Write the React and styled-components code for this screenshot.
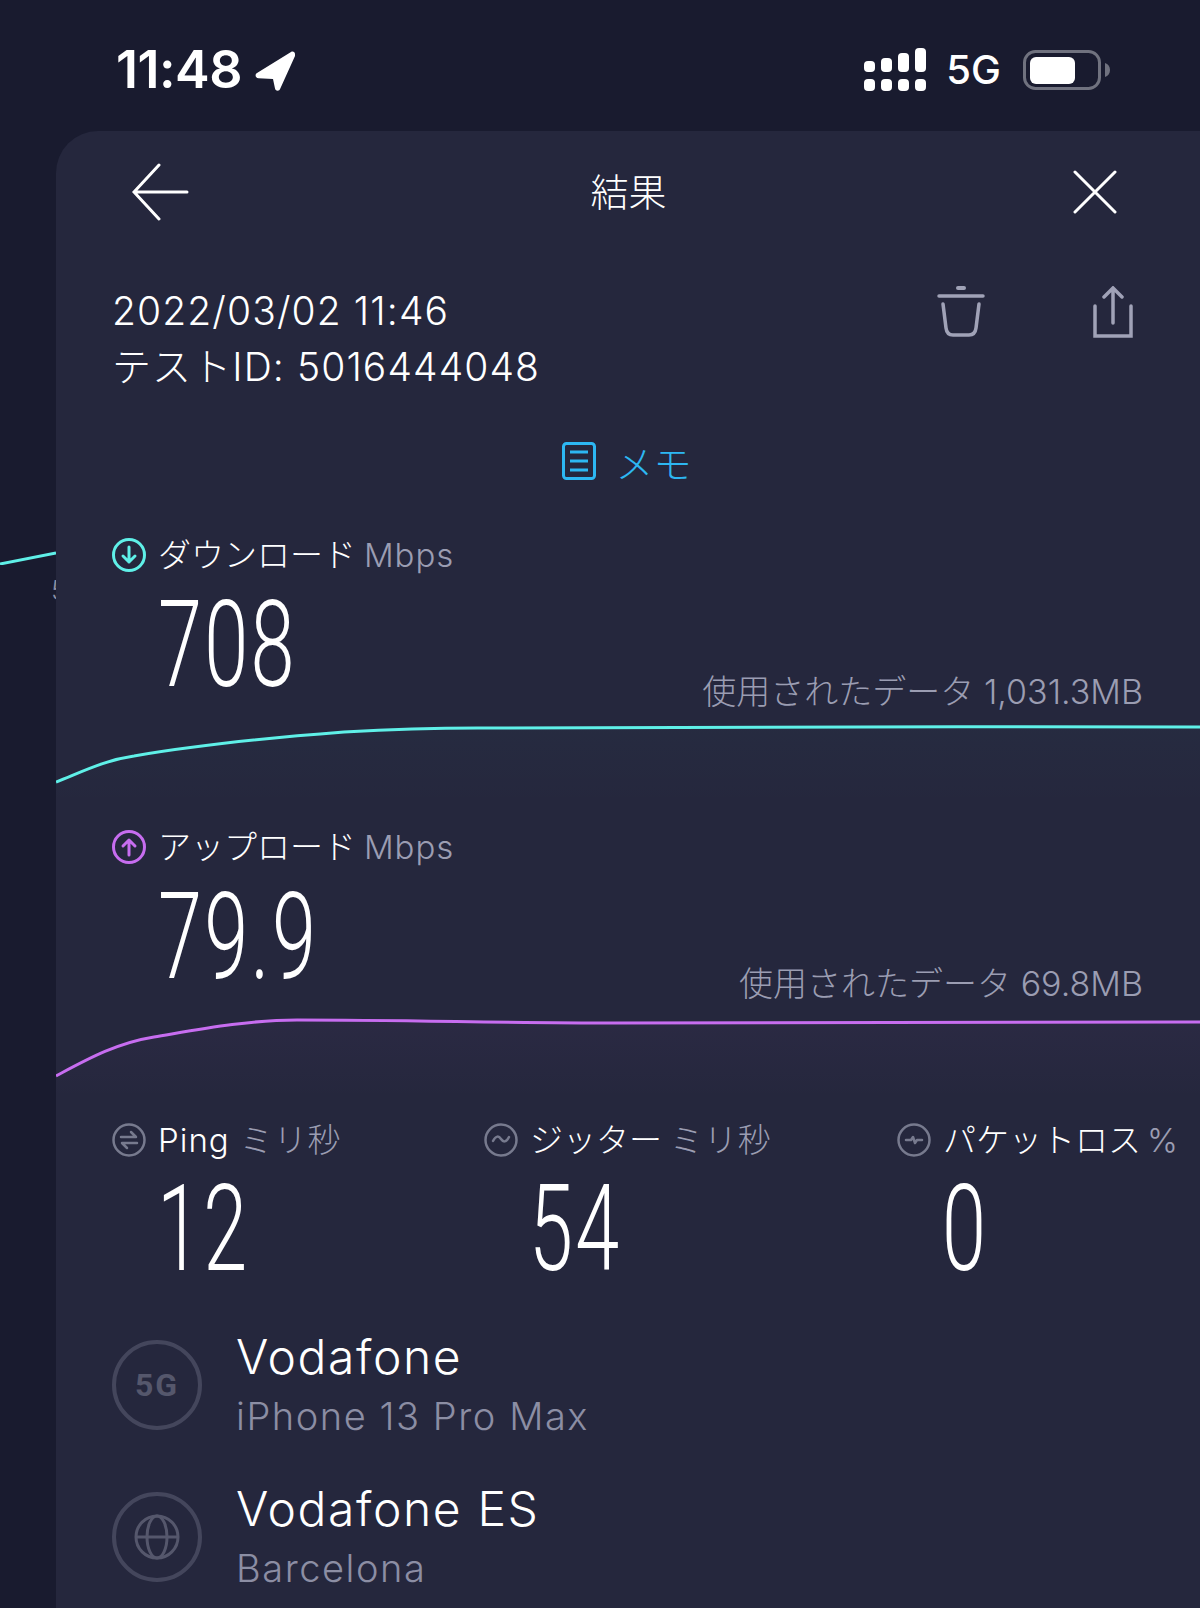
import React from 'react';
import styled, { createGlobalStyle } from 'styled-components';

const Global = createGlobalStyle`
  html, body { margin: 0; padding: 0; background: #191b2f; }
  body { font-family: Inter, "Noto Sans CJK JP", sans-serif; }
  #root { width: 1200px; height: 1608px; overflow: hidden; }
`;
const sans = 'Inter, "Noto Sans CJK JP", sans-serif';

const Page = styled.div`width:1200px;height:1608px;overflow:hidden;background:#191b2f;color:#fff;font-family:${sans};`;
const StatusBar = styled.header`height:131px;display:flex;align-items:center;justify-content:space-between;padding:24px 89px 16px 116px;box-sizing:border-box;`;
const Clock = styled.div`display:flex;align-items:center;gap:13px;font-size:52px;font-weight:600;line-height:1;letter-spacing:-.5px;`;
const StatusRight = styled.div`display:flex;align-items:center;`;
const Net = styled.span`font-size:40px;font-weight:500;margin:0 22px 0 20px;line-height:1;`;
const Body = styled.div`display:flex;align-items:stretch;height:1477px;`;
const Gutter = styled.aside`width:56px;flex:none;overflow:hidden;padding-top:420px;`;
const GutterDigit = styled.div`margin:12px 0 0 51px;font-size:27px;line-height:1;font-weight:300;color:#8d8fa3;`;
const Card = styled.main`flex:1;min-width:0;background:#25273d;border-top-left-radius:42px;overflow:hidden;`;
const NavBar = styled.div`height:122px;padding:0 83px 0 76px;display:flex;align-items:center;justify-content:space-between;position:relative;`;
const Title = styled.h1`margin:0;font-size:38px;font-weight:300;line-height:1;position:relative;left:-3px;`;
const Info = styled.section`display:flex;justify-content:space-between;align-items:flex-start;padding:30px 67px 0 56px;height:128px;box-sizing:border-box;`;
const InfoText = styled.div`font-size:39px;line-height:56px;font-weight:300;letter-spacing:1.1px;`;
const InfoActions = styled.div`display:flex;gap:108px;padding-top:3px;`;
const Memo = styled.div`height:60px;display:flex;align-items:center;justify-content:center;gap:19px;color:#2db7f2;font-size:38px;font-weight:300;margin-top:50px;padding-right:2px;`;
const Metric = styled.section`padding-top:${p => p.$top}px;`;
const Head = styled.div`display:flex;align-items:center;gap:12px;padding-left:56px;font-size:33px;line-height:50px;font-weight:300;`;
const Unit = styled.span`color:#9b9db2;margin-left:${p => p.$gap ?? 8}px;font-weight:300;letter-spacing:.9px;`;
const Latin = styled.span`letter-spacing:1px;`;
const ValueRow = styled.div`display:flex;justify-content:space-between;align-items:flex-end;padding:0 57px 0 102px;height:136px;`;
const BigNumber = styled.div`font-family:Roboto,sans-serif;font-size:120px;line-height:125px;font-weight:300;transform:scaleX(.66);transform-origin:left center;height:125px;white-space:nowrap;letter-spacing:.03em;align-self:flex-start;margin-top:3px;`;
const Used = styled.div`font-size:34px;line-height:40px;font-weight:300;color:#9b9db2;padding-bottom:4px;`;
const Chart = styled.svg`display:block;width:1144px;height:${p => p.$h}px;`;
const Stats = styled.section`display:grid;grid-template-columns:372px 413px 1fr;padding:17px 0 0 56px;`;
const Stat = styled.div`display:flex;flex-direction:column;`;
const StatHead = styled.div`display:flex;align-items:center;gap:12px;font-size:33px;line-height:50px;font-weight:300;white-space:nowrap;`;
const StatValue = styled(BigNumber)`margin-left:45px;margin-top:2px;height:120px;`;
const Rows = styled.section`padding-top:22px;`;
const Row = styled.div`display:flex;align-items:center;gap:34px;padding-left:56px;height:152px;`;
const Badge = styled.div`width:90px;height:90px;border-radius:50%;border:4px solid #44465c;box-sizing:border-box;display:flex;align-items:center;justify-content:center;color:#55576c;font-family:Roboto,sans-serif;font-weight:700;font-size:32px;letter-spacing:2px;flex:none;`;
const RowText = styled.div`display:flex;flex-direction:column;`;
const RowTitle = styled.div`font-size:48px;line-height:62px;font-weight:300;letter-spacing:1.6px;`;
const RowSub = styled.div`font-size:38px;line-height:56px;font-weight:300;color:#8c8ea4;letter-spacing:1.55px;`;

const Signal = () => (
  <svg width="62" height="44" viewBox="0 0 62 44" fill="#fff">
    {[[0,13],[17,10],[34,5],[51,0]].map(([x,y]) => <rect key={x} x={x} y={y} width="11" height={24-y} rx="4"/>)}
    {[0,17,34,51].map(x => <rect key={x} x={x} y="31" width="11" height="12" rx="4"/>)}
  </svg>
);
const Battery = () => (
  <svg width="88" height="40" viewBox="0 0 88 40">
    <rect x="1.5" y="1.5" width="75" height="37" rx="11" fill="none" stroke="#70727f" strokeWidth="3"/>
    <rect x="7" y="7" width="45" height="27" rx="6" fill="#fff"/>
    <path d="M82 13c3 1 5 3.500 5 7s-2 6-5 7z" fill="#70727f"/>
  </svg>
);
const Locator = () => (
  <svg width="40" height="40" viewBox="0 0 40 40" fill="#fff" style={{ marginTop: 2 }}>
    <path d="M36 1 2 22c-2.500 1.600-1.500 5 1.500 5.200L18 28l2 9.500c.6 2.800 4.400 3 5.200.3L40 5c.8-3-1.500-5.500-4-4z"/>
  </svg>
);
const Back = () => (
  <svg width="58" height="58" viewBox="0 0 58 58" fill="none" stroke="#fff" strokeWidth="3" strokeLinecap="round">
    <path d="M27 2 2 29l25 27M3 29h52"/>
  </svg>
);
const Close = () => (
  <svg width="44" height="44" viewBox="0 0 44 44" fill="none" stroke="#fff" strokeWidth="3" strokeLinecap="round">
    <path d="M2 2l40 40M42 2 2 42"/>
  </svg>
);
const Trash = () => (
  <svg width="48" height="52" viewBox="0 0 48 52" fill="none" stroke="#a0a2b7" strokeWidth="3.500" strokeLinecap="round">
    <path d="M21 2h6" strokeWidth="4"/><path d="M2 10h44"/>
    <path d="M6 18l3 24c.6 5 3 7 7 7h16c4 0 6.400-2 7-7l3-24"/>
  </svg>
);
const Share = () => (
  <svg width="40" height="52" viewBox="0 0 40 52" fill="none" stroke="#a0a2b7" strokeWidth="3.500" strokeLinecap="round">
    <path d="M20 37V3M11 11l9-9 9 9"/><path d="M2 20v30h36V20"/>
  </svg>
);
const Note = () => (
  <svg width="34" height="38" viewBox="0 0 34 38" fill="none" stroke="#2db7f2" strokeWidth="3">
    <rect x="1.500" y="1.500" width="31" height="35" rx="3"/>
    <path d="M8 10h18M8 19h18M8 28h18"/>
  </svg>
);
const Circle = ({ color, children, w = 3 }) => (
  <svg width="34" height="34" viewBox="0 0 34 34" fill="none" stroke={color} strokeWidth={w} strokeLinecap="round" strokeLinejoin="round" style={{ flex: 'none' }}>
    <circle cx="17" cy="17" r="15.500"/>{children}
  </svg>
);
const Globe = () => (
  <svg width="46" height="46" viewBox="0 0 46 46" fill="none" stroke="#55576c" strokeWidth="3">
    <circle cx="23" cy="23" r="21"/><ellipse cx="23" cy="23" rx="10" ry="21"/><path d="M2 23h42"/>
  </svg>
);

const Curve = ({ d, color, id, h, glow }) => (
  <Chart $h={h} viewBox={`0 0 1144 ${h}`} preserveAspectRatio="none">
    <defs>
      <linearGradient id={id} x1="0" y1="0" x2="0" y2="1">
        <stop offset="0" stopColor={color} stopOpacity={glow}/>
        <stop offset="1" stopColor={color} stopOpacity="0"/>
      </linearGradient>
    </defs>
    <path d={`${d} V${h} H0 Z`} fill={`url(#${id})`}/>
    <path d={d} fill="none" stroke={color} strokeWidth="3"/>
  </Chart>
);

export default function App() {
  return (
    <Page>
      <Global/>
      <StatusBar>
        <Clock>11:48<Locator/></Clock>
        <StatusRight><Signal/><Net>5G</Net><Battery/></StatusRight>
      </StatusBar>
      <Body>
        <Gutter>
          <svg width="56" height="14" viewBox="0 0 56 14" style={{ display: 'block' }}>
            <path d="M0 13 56 2" stroke="#5ff0e8" strokeWidth="3" fill="none"/>
          </svg>
          <GutterDigit>5</GutterDigit>
        </Gutter>
        <Card>
          <NavBar><Back/><Title>結果</Title><Close/></NavBar>
          <Info>
            <InfoText>2022/03/02 11:46<br/>テストID: 5016444048</InfoText>
            <InfoActions><Trash/><Share/></InfoActions>
          </Info>
          <Memo><Note/>メモ</Memo>
          <Metric $top={39}>
            <Head>
              <Circle color="#5ff0e8"><path d="M17 9v15M11 18l6 6 6-6"/></Circle>
              <span>ダウンロード<Unit>Mbps</Unit></span>
            </Head>
            <ValueRow><BigNumber>708</BigNumber><Used>使用されたデータ 1,031.3MB</Used></ValueRow>
            <Curve id="dl" color="#5ff0e8" glow=".02" h={90} d="M0 66 C30 54 50 44 78 40 C130 31 210 22 288 16 C340 13 380 12 422 12 C600 12 900 10 1144 11"/>
          </Metric>
          <Metric $top={16}>
            <Head>
              <Circle color="#c76df0"><path d="M17 25V10M11 16l6-6 6 6"/></Circle>
              <span>アップロード<Unit>Mbps</Unit></span>
            </Head>
            <ValueRow><BigNumber>79.9</BigNumber><Used>使用されたデータ 69.8MB</Used></ValueRow>
            <Curve id="ul" color="#c76df0" glow=".035" h={90} d="M0 68 C30 52 60 35 98 29 C140 22 190 12 241 12 C350 12 450 15 559 15 C800 15 1000 13 1144 14"/>
          </Metric>
          <Stats>
            <Stat>
              <StatHead>
                <Circle color="#777a8e" w={2.500}><path d="M9 14h15l-5-5M25 20H10l5 5"/></Circle>
                <span><Latin>Ping</Latin><Unit $gap={10}>ミリ秒</Unit></span>
              </StatHead>
              <StatValue>12</StatValue>
            </Stat>
            <Stat>
              <StatHead>
                <Circle color="#777a8e" w={2.500}><path d="M9 18c3-6 6-5 8-2s5 4 8-2"/></Circle>
                <span>ジッター<Unit $gap={8}>ミリ秒</Unit></span>
              </StatHead>
              <StatValue>54</StatValue>
            </Stat>
            <Stat>
              <StatHead>
                <Circle color="#777a8e" w={2.500}><path d="M9 17h5l2-3 2 6 2-3h5"/></Circle>
                <span>パケットロス<Unit $gap={6}>%</Unit></span>
              </StatHead>
              <StatValue>0</StatValue>
            </Stat>
          </Stats>
          <Rows>
            <Row>
              <Badge>5G</Badge>
              <RowText><RowTitle>Vodafone</RowTitle><RowSub>iPhone 13 Pro Max</RowSub></RowText>
            </Row>
            <Row>
              <Badge><Globe/></Badge>
              <RowText><RowTitle>Vodafone ES</RowTitle><RowSub>Barcelona</RowSub></RowText>
            </Row>
          </Rows>
        </Card>
      </Body>
    </Page>
  );
}
